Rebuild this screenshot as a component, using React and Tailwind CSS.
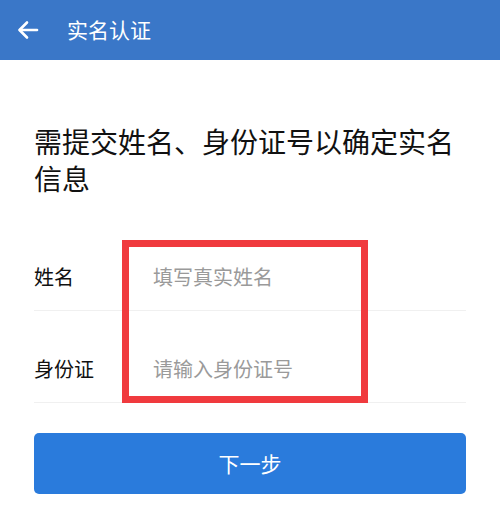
import React from "react";

const cjk = { fontFamily: '"Noto Sans CJK SC", "Noto Sans", sans-serif' };

const App = () => {
  return (
    <div className="w-[500px] h-[505px] bg-white overflow-hidden" style={cjk}>
      {/* Header */}
      <div className="h-[60px] bg-[#3a77c8] flex items-center pl-[16px]">
        <svg width="24" height="24" viewBox="0 0 24 24" fill="none" stroke="white" strokeWidth="2.6" strokeLinecap="round" strokeLinejoin="round">
          <path d="M21 12H4" />
          <path d="M11 4.5L3.5 12l7.5 7.5" />
        </svg>
        <span className="ml-[27px] text-white text-[21px]">实名认证</span>
      </div>

      {/* Title */}
      <div className="px-[34px] pt-[63px]">
        <h1 className="max-w-[425px] text-[28px] leading-[37px] text-[#111]">
          需提交姓名、身份证号以确定实名信息
        </h1>
      </div>

      {/* Form */}
      <div className="relative mx-[34px] mt-[22px]">
        <div className="flex items-end h-[92px] pb-[19px] border-b border-[#f0f0f0]">
          <span className="w-[119px] text-[20px] leading-[28px] text-[#111]">姓名</span>
          <span className="text-[20px] leading-[28px] text-[#9a9a9a]">填写真实姓名</span>
        </div>
        <div className="flex items-end h-[92px] pb-[19px] border-b border-[#f0f0f0]">
          <span className="w-[119px] text-[20px] leading-[28px] text-[#111]">身份证</span>
          <span className="text-[20px] leading-[28px] text-[#9a9a9a]">请输入身份证号</span>
        </div>
        {/* highlight overlay */}
        <div className="absolute left-[88px] top-[21px] w-[246px] h-[163px] border-[7px] border-[#f03a3e]" />
      </div>

      {/* Button */}
      <div className="px-[34px] mt-[30px]">
        <button className="w-full h-[61px] rounded-[5px] bg-[#2a7bdc] text-white text-[21px]">
          下一步
        </button>
      </div>
    </div>
  );
};

export default App;
